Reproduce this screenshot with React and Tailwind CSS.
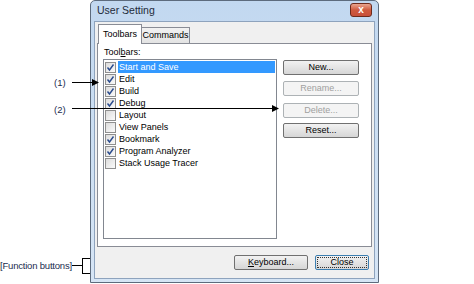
import React from 'react';

const toolbars = [
  { name: 'Start and Save', checked: true, selected: true },
  { name: 'Edit', checked: true },
  { name: 'Build', checked: true },
  { name: 'Debug', checked: true },
  { name: 'Layout', checked: false },
  { name: 'View Panels', checked: false },
  { name: 'Bookmark', checked: true },
  { name: 'Program Analyzer', checked: true },
  { name: 'Stack Usage Tracer', checked: false },
];

const Check = ({ checked }) => (
  <span className="w-[11px] h-[11px] border border-[#8f8f8f] bg-gradient-to-br from-[#dcdcdc] to-[#fbfbfb] flex items-center justify-center shrink-0">
    {checked && (
      <svg width="9" height="9" viewBox="0 0 9 9">
        <path d="M1.5 4.5 L3.5 7 L7.5 1.5" fill="none" stroke="#2a4b8d" strokeWidth="1.4" />
      </svg>
    )}
  </span>
);

const Btn = ({ children, disabled, focused }) => (
  <div
    className={`h-[15px] flex items-center justify-center rounded-[2px] border text-[9px] leading-none ${
      disabled
        ? 'border-[#adb2b5] bg-[#f4f4f4] text-[#a0a0a0]'
        : focused
        ? 'border-[#3c7fb1] bg-gradient-to-b from-[#f2f2f2] to-[#d6d6d6] text-black outline outline-1 outline-dotted outline-[#333] -outline-offset-[3px]'
        : 'border-[#707070] bg-gradient-to-b from-[#f2f2f2] to-[#d6d6d6] text-black'
    }`}
  >
    {children}
  </div>
);

export default function App() {
  return (
    <div className="relative w-[474px] h-[284px] bg-white overflow-hidden" style={{ fontFamily: '"Liberation Sans", Arial, sans-serif' }}>
      {/* dialog */}
      <div className="ml-[90px] w-[289px] h-[283px] border border-[#5d6b7d] rounded-t-[5px] bg-gradient-to-b from-[#c2d8f0] to-[#d6e5f5] flex flex-col px-[3px] pb-[3px]">
        <div className="h-[20px] flex items-center justify-between pl-[3px] pr-[3px] shrink-0">
          <span className="text-[10.5px] text-[#1e2b3a]">User Setting</span>
          <div className="w-[22px] h-[14px] mt-[-3px] rounded-[3px] border border-[#6d2a1c] bg-gradient-to-b from-[#e8a58f] via-[#cf5a3f] to-[#c8503a] flex items-center justify-center">
            <span className="text-white text-[10px] font-bold leading-none">x</span>
          </div>
        </div>
        <div className="flex-1 bg-[#f0f0f0] border border-[#8ea3bd] flex flex-col px-[2px] pt-[1px] pb-[8px]">
          {/* tabs */}
          <div className="flex items-end h-[20px] pl-[1px]">
            <div className="h-[20px] w-[44px] border border-b-0 border-[#898c95] bg-white text-[9px] flex items-center justify-center relative z-10 -mb-px">
              Toolbars
            </div>
            <div className="h-[16px] w-[48px] border border-l-0 border-b-0 border-[#898c95] bg-gradient-to-b from-[#f2f2f2] to-[#e3e3e3] text-[9px] flex items-center justify-center">
              Commands
            </div>
          </div>
          <div className="h-[204px] border border-[#898c95] bg-white flex flex-col px-[5px] pt-[2px]">
            <div className="text-[9px] h-[13px] leading-[13px] pl-[1px]">
              Tool<span className="underline">b</span>ars:
            </div>
            <div className="flex gap-[6px]">
              <div className="w-[174px] h-[180px] border border-[#828790] bg-white pt-[1px] pl-[1px]">
                {toolbars.map((t) => (
                  <div key={t.name} className="flex items-center h-[12px] gap-[2px]">
                    <Check checked={t.checked} />
                    <span
                      className={`flex-1 h-[12px] leading-[12px] text-[9px] pl-[1px] mr-[1px] ${
                        t.selected ? 'bg-[#3399ff] text-white' : 'text-black'
                      }`}
                    >
                      {t.name}
                    </span>
                  </div>
                ))}
              </div>
              <div className="w-[76px] flex flex-col pt-[1px]">
                <Btn>New...</Btn>
                <div className="h-[6px]" />
                <Btn disabled>Rename...</Btn>
                <div className="h-[7px]" />
                <Btn disabled>Delete...</Btn>
                <div className="h-[5px]" />
                <Btn>Reset...</Btn>
              </div>
            </div>
          </div>
          <div className="flex-1" />
          <div className="flex justify-end gap-[7px] pr-[3px]">
            <div className="w-[74px]">
              <Btn>
                <span className="underline">K</span>eyboard...
              </Btn>
            </div>
            <div className="w-[54px]">
              <Btn focused>Close</Btn>
            </div>
          </div>
        </div>
      </div>

      {/* callouts */}
      <span className="absolute left-[54px] top-[76px] text-[9.5px] text-[#1b2d4f]">(1)</span>
      <div className="absolute left-[72px] top-[82px] w-[22px] h-px bg-black" />
      <svg className="absolute left-[92px] top-[79px]" width="7" height="7" viewBox="0 0 7 7">
        <path d="M0 0 L7 3.5 L0 7 Z" fill="black" />
      </svg>

      <span className="absolute left-[54px] top-[103px] text-[9.5px] text-[#1b2d4f]">(2)</span>
      <div className="absolute left-[72px] top-[108px] w-[202px] h-px bg-black" />
      <svg className="absolute left-[272px] top-[105px]" width="7" height="7" viewBox="0 0 7 7">
        <path d="M0 0 L7 3.5 L0 7 Z" fill="black" />
      </svg>

      <span className="absolute left-0 top-[259px] text-[9.5px] text-[#1b2d4f] tracking-[-0.2px]">[Function buttons]</span>
      <div className="absolute left-[72px] top-[265px] w-[10px] h-px bg-black" />
      <div className="absolute left-[82px] top-[258px] w-[8px] h-[16px] border border-r-0 border-black" />
    </div>
  );
}
